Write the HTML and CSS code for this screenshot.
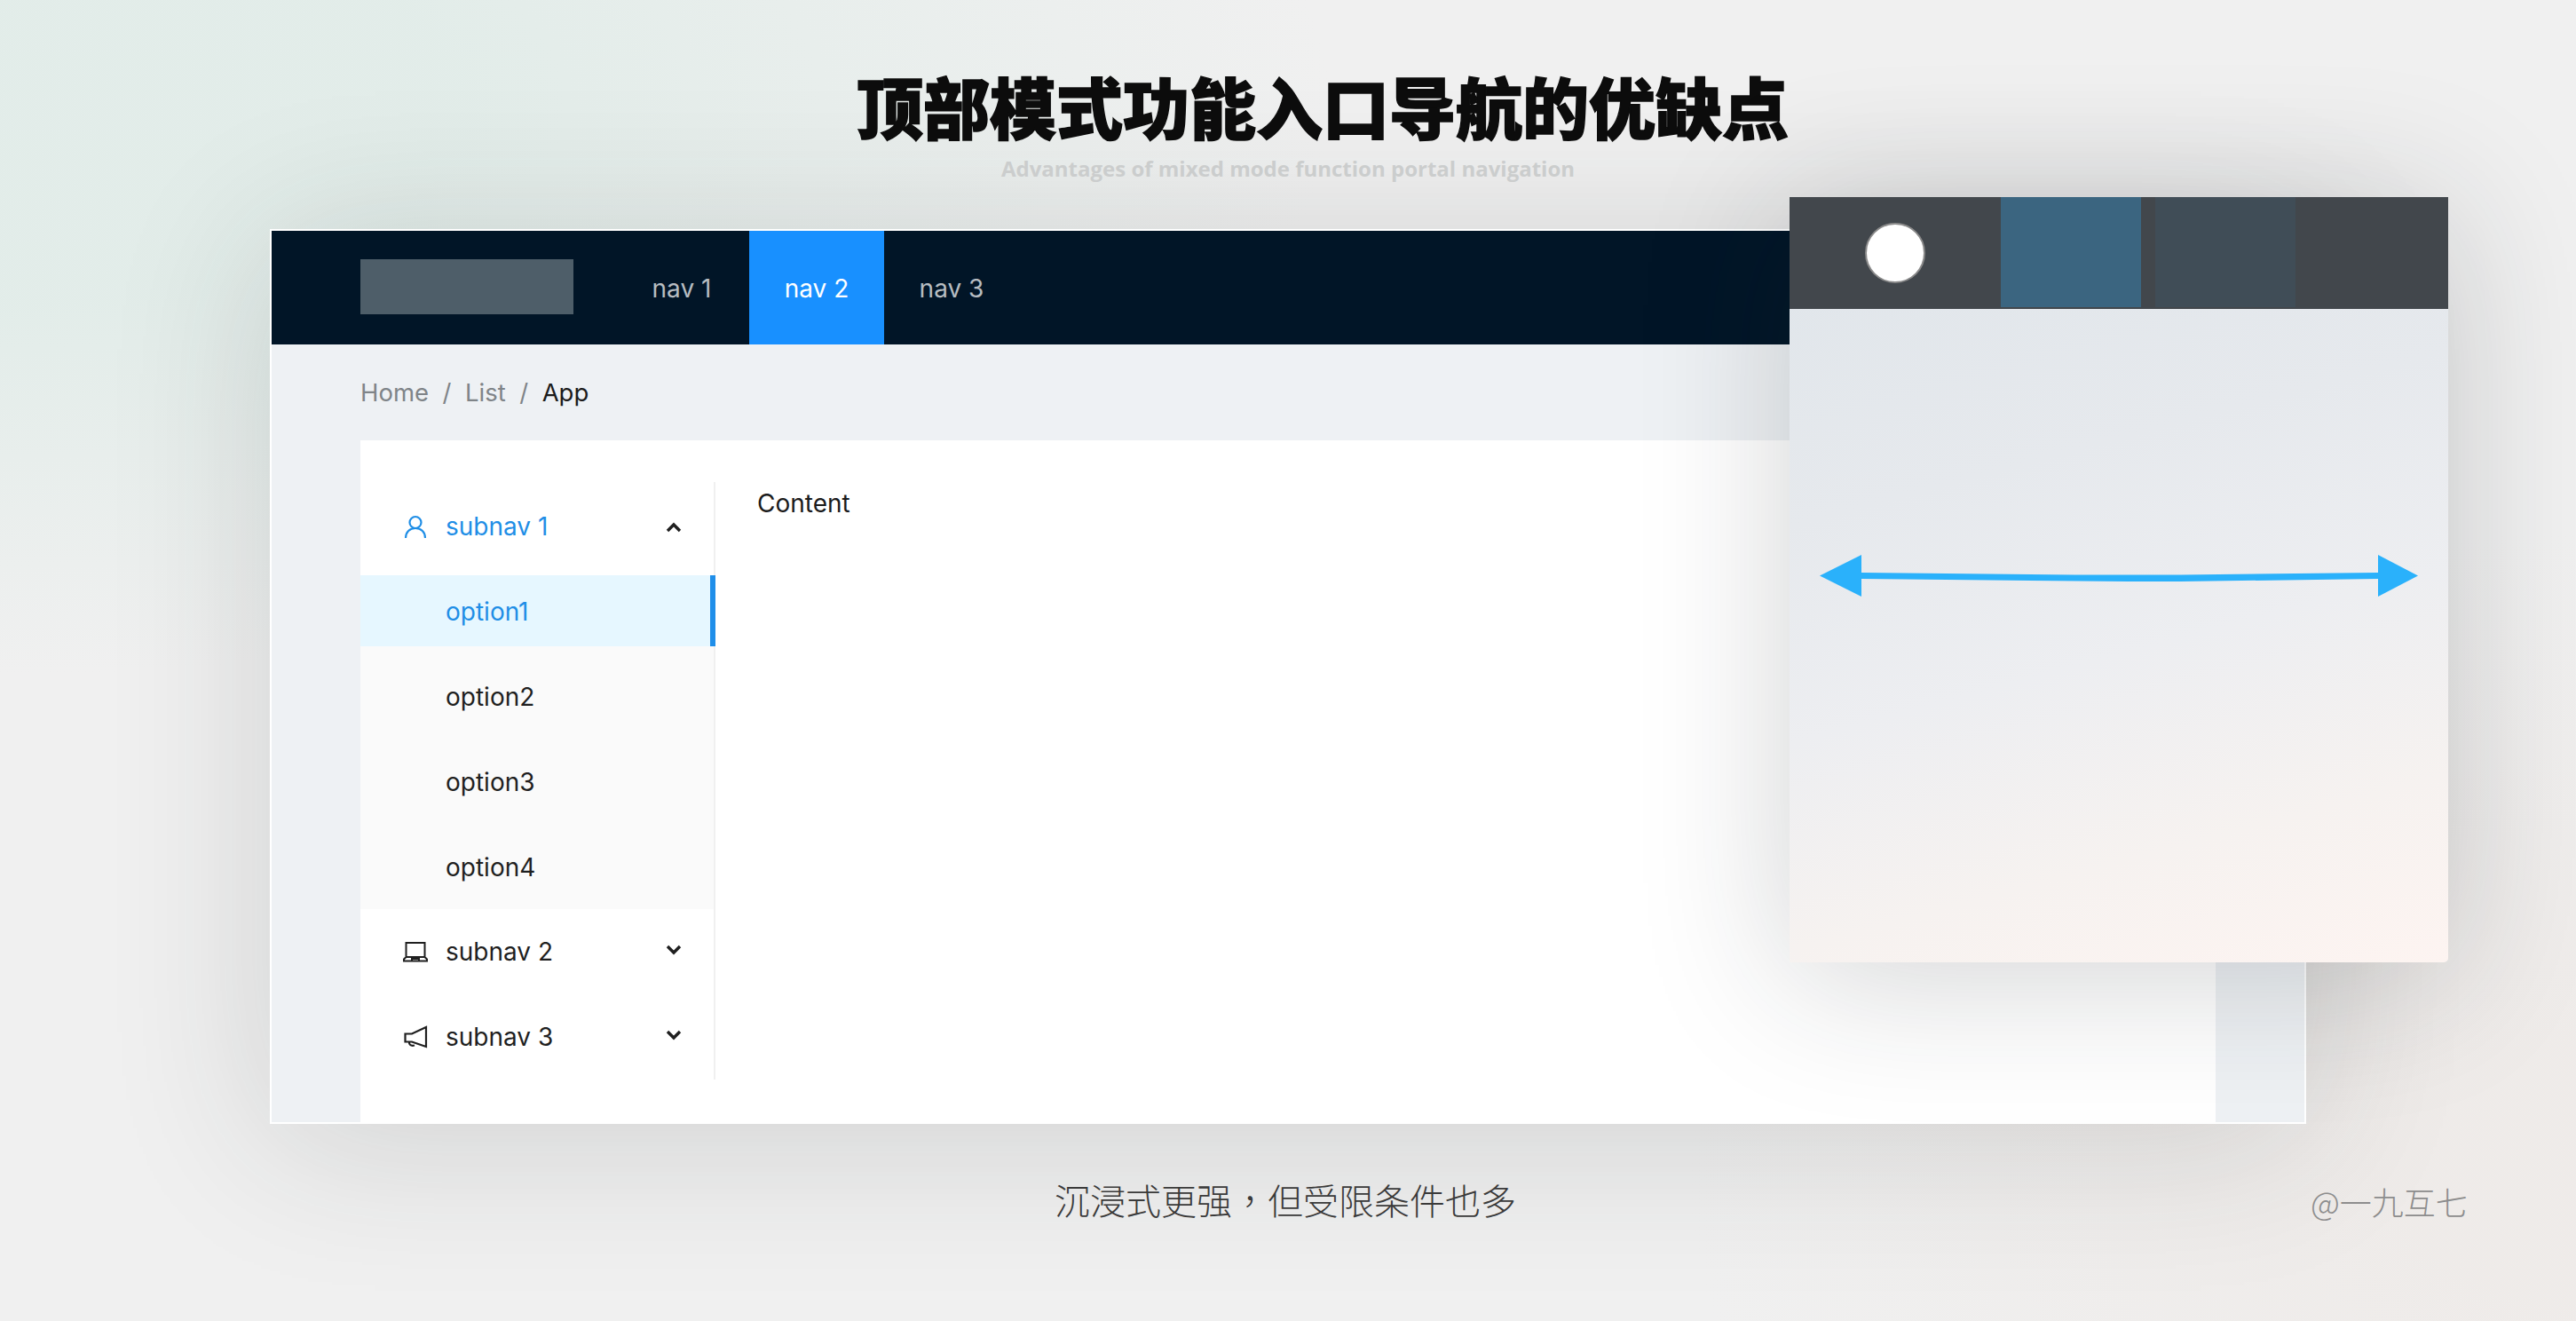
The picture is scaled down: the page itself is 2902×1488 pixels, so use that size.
FILE: index.html
```html
<!DOCTYPE html>
<html lang="zh">
<head>
<meta charset="utf-8">
<title>顶部模式功能入口导航的优缺点</title>
<link rel="stylesheet" href="styles.css">
</head>
<body>
<main class="stage">
  <h1 class="title">顶部模式功能入口导航的优缺点</h1>
  <p class="subtitle">Advantages of mixed mode function portal navigation</p>

  <section class="window">
    <header class="topbar">
      <div class="logo"></div>
      <nav class="topnav">
        <a class="topnav-item">nav 1</a>
        <a class="topnav-item is-active">nav 2</a>
        <a class="topnav-item">nav 3</a>
      </nav>
    </header>
    <div class="body">
      <div class="crumbs">
        <span>Home</span><span class="sep">/</span><span>List</span><span class="sep">/</span><span class="crumb-current">App</span>
      </div>
      <div class="panel">
        <aside class="sider">
          <div class="row row-open">
            <svg class="icon" viewBox="0 0 28 28" fill="none" stroke="currentColor" stroke-width="2.2"><circle cx="14" cy="9.5" r="6.5"/><path d="M3 27c0-6.8 4.6-11 11-11s11 4.200 11 11"/></svg>
            <span class="row-label">subnav 1</span>
            <svg class="caret caret-up" viewBox="0 0 18 12" fill="none" stroke="#1f1f1f" stroke-width="3.4"><path d="M2 10l7-7 7 7"/></svg>
          </div>
          <div class="submenu">
            <div class="option is-selected">option1</div>
            <div class="option">option2</div>
            <div class="option">option3</div>
            <div class="option">option4</div>
          </div>
          <div class="row">
            <svg class="icon" viewBox="0 0 28 24" fill="none" stroke="currentColor" stroke-width="2"><path d="M3.500 18V2h21v16M1 22.500v-2l2.500-2.500h21l2.500 2.500v2zM10 22v-2h8v2"/></svg>
            <span class="row-label">subnav 2</span>
            <svg class="caret" viewBox="0 0 18 12" fill="none" stroke="#1f1f1f" stroke-width="3.400"><path d="M2 2l7 7 7-7"/></svg>
          </div>
          <div class="row row-last">
            <svg class="icon" viewBox="0 0 28 26" fill="none" stroke="currentColor" stroke-width="2.200"><path d="M26 2v22L10 18.500H2.500v-9H10zM7 18.500c-.5 3.500 2 5 6 4"/></svg>
            <span class="row-label">subnav 3</span>
            <svg class="caret" viewBox="0 0 18 12" fill="none" stroke="#1f1f1f" stroke-width="3.400"><path d="M2 2l7 7 7-7"/></svg>
          </div>
        </aside>
        <div class="content">Content</div>
      </div>
    </div>
  </section>

  <p class="caption" lang="zh-TW">沉浸式更强，但受限条件也多</p>

  <aside class="callout">
    <div class="callout-bar">
      <div class="callout-dot-cell"><span class="callout-dot"></span></div>
      <div class="callout-tile tile-blue"></div>
      <div class="callout-tile tile-slate"></div>
    </div>
    <svg class="callout-arrow" viewBox="0 0 674 48" fill="#2ab1fb"><path d="M0 23.500 47 0v20l240 2.500h120l222-2.500V0l45 23.500L629 47V27l-222 3h-60L47 27v20z"/></svg>
  </aside>

  <p class="watermark">@一九互七</p>
</main>
</body>
</html>
```

FILE: styles.css
```css
* { box-sizing: border-box; }
html, body { margin: 0; padding: 0; }
body {
  width: 2902px;
  height: 1488px;
  overflow: hidden;
  font-family: Inter, "Noto Sans", "Liberation Sans", sans-serif;
  color: #1f1f1f;
  background:
    radial-gradient(1500px 640px at 0 120px, rgba(224, 236, 232, .85) 35%, rgba(224, 236, 232, 0)),
    radial-gradient(1000px 720px at 2902px 1320px, rgba(238, 233, 230, .7) 20%, rgba(238, 233, 230, 0)),
    #f0f0f0;
}
.stage {
  position: relative;
  height: 1488px;
  padding: 70px 304px 0 304px;
}
.title {
  margin: 0 -160px 0 -82px;
  height: 100px;
  line-height: 98px;
  text-align: center;
  font-family: "Noto Sans CJK SC", sans-serif;
  font-size: 75px;
  font-weight: 900;
  color: #0c0c0c;
  -webkit-text-stroke: 1.5px #0c0c0c;
  white-space: nowrap;
}
.subtitle {
  margin: 0 0 48px;
  height: 40px;
  line-height: 40px;
  text-align: center;
  font-family: "Open Sans", sans-serif;
  font-size: 24px;
  font-weight: 700;
  color: #cbcdcd;
}
.window {
  height: 1008px;
  display: flex;
  flex-direction: column;
  border: 2px solid #fff;
  background: #eef1f4;
  box-shadow: 0 16px 170px rgba(40, 45, 45, .16);
  overflow: hidden;
}
.topbar {
  flex: none;
  height: 128px;
  display: flex;
  padding-left: 100px;
  background: #011527;
}
.logo {
  width: 240px;
  height: 62px;
  margin: 32px 46px 0 0;
  background: #4e5e69;
}
.topnav { display: flex; }
.topnav-item {
  width: 152px;
  padding-top: 1px;
  line-height: 128px;
  text-align: center;
  font-size: 28px;
  color: rgba(255, 255, 255, .72);
}
.topnav-item.is-active { background: #1890ff; color: #fff; }
.body {
  flex: 1;
  min-height: 0;
  display: flex;
  flex-direction: column;
  padding: 0 100px;
  background: #eef1f4;
}
.crumbs {
  flex: none;
  height: 108px;
  display: flex;
  align-items: center;
  font-size: 27.500px;
  color: #7f8488;
}
.sep { margin: 0 15.500px; }
.crumb-current { color: #1b1b1b; }
.panel {
  flex: 1;
  min-height: 0;
  display: flex;
  padding: 47px 0 48px;
  background: #fff;
}
.sider {
  flex: none;
  width: 400px;
  padding: 10px 0 8px;
  border-right: 2px solid #f0f0f0;
  font-size: 28px;
}
.row {
  display: flex;
  align-items: center;
  height: 80px;
  margin-bottom: 16px;
  padding: 0 36px 0 48px;
}
.row-open { margin-bottom: 15px; color: #1f8ee6; }
.row-last { margin-bottom: 0; }
.icon { flex: none; width: 28px; height: 28px; margin-right: 20px; }
.row-label { flex: 1; }
.caret { flex: none; width: 18px; height: 12px; margin-top: -4px; }
.caret-up { margin-top: 2px; }
.submenu {
  height: 376px;
  margin-bottom: 8px;
  background: #fafafa;
}
.option {
  height: 80px;
  margin-bottom: 16px;
  padding-left: 96px;
  line-height: 82px;
  margin-right: -2px;
}
.option.is-selected {
  background: #e6f7ff;
  border-right: 6px solid #1f8ee9;
  color: #1f8ee6;
}
.content {
  flex: 1;
  padding: 0 47px;
  line-height: 48px;
  font-size: 28px;
  color: #1b1b1b;
}
.caption {
  margin: 55px 0 0;
  padding-right: 6px;
  height: 60px;
  line-height: 60px;
  text-align: center;
  font-family: "Noto Sans CJK TC", sans-serif;
  font-size: 40px;
  font-weight: 300;
  color: #3a3a3a;
}
.callout {
  position: absolute;
  left: 2016px;
  top: 222px;
  width: 742px;
  height: 862px;
  border-radius: 0 0 5px 0;
  background: linear-gradient(165deg, #dfe5ea 0, #e6e9ed 35%, #edeef1 58%, #f6f2f0 80%, #fdf4f1 100%);
  box-shadow: 0 16px 170px rgba(30, 35, 40, .2);
}
.callout-bar {
  display: flex;
  height: 126px;
  background: #42474c;
}
.callout-dot-cell {
  width: 238px;
  display: flex;
  align-items: center;
  justify-content: center;
}
.callout-dot {
  width: 68px;
  height: 68px;
  border-radius: 50%;
  background: #fff;
  border: 2px solid #8a8a8a;
}
.callout-tile { width: 158px; height: 124px; }
.tile-blue { background: #3b6580; margin-right: 16px; }
.tile-slate { background: #404d57; }
.callout-arrow {
  position: absolute;
  left: 34px;
  top: 403px;
  width: 674px;
  height: 48px;
}
.watermark {
  position: absolute;
  left: 2603px;
  top: 1326px;
  margin: 0;
  line-height: 54px;
  font-family: "Noto Sans CJK SC", sans-serif;
  font-size: 36px;
  font-weight: 300;
  color: #8d8d8d;
  white-space: nowrap;
}
```
